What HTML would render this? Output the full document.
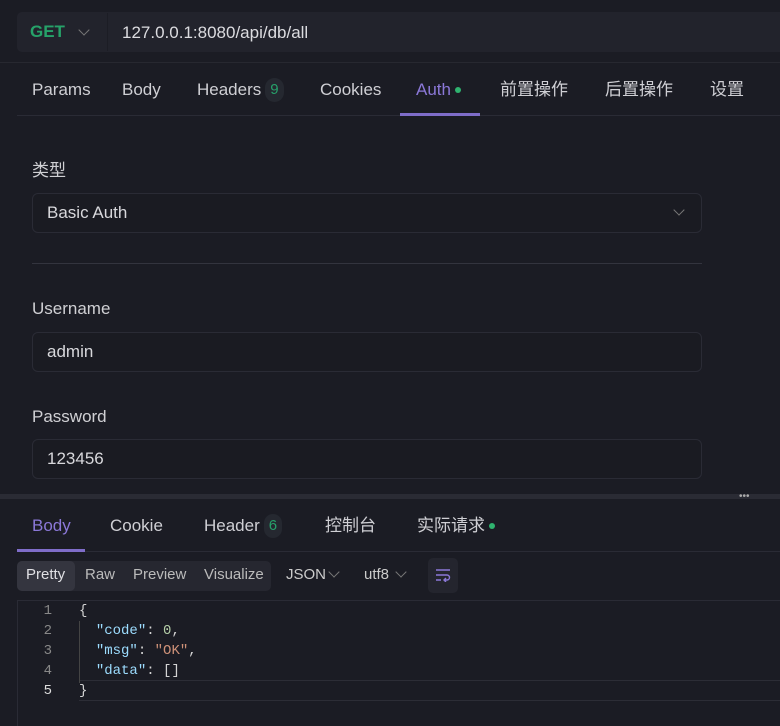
<!DOCTYPE html>
<html><head><meta charset="utf-8"><style>
*{box-sizing:border-box;margin:0;padding:0}
body{width:780px;height:726px;background:#1b1c24;color:#d4d4d8;font-family:"Liberation Sans","Noto Sans CJK SC",sans-serif;font-size:17px;position:relative;overflow:hidden}
.abs{position:absolute}
.url{left:17px;top:12px;width:770px;height:40px;background:#22232c;border-radius:5px}
.get{left:30px;top:22px;color:#26a269;font-weight:bold;font-size:17px;line-height:20px}
.chev{display:inline-block;width:8px;height:8px;border-right:1px solid #777;border-bottom:1px solid #777;transform:rotate(45deg)}
.tab{top:78px;height:24px;line-height:24px;font-size:17px;color:#cfcfd4;display:flex;align-items:center;white-space:nowrap}
.badge{display:inline-block;background:#252830;color:#27a06a;border-radius:10px;padding:0 5px;height:24px;line-height:24px;font-size:15px;margin-left:4px}
.dot{display:inline-block;width:6px;height:6px;border-radius:50%;background:#2fb36f;margin-left:4px}
.inp{left:32px;width:670px;height:40px;border:1px solid #2a2b35;border-radius:6px;background:#1a1b22;padding:0 14px;line-height:38px;color:#d8d8dc}
.lab{left:32px;color:#d0d0d4;line-height:22px}
.code{font-family:"Liberation Mono",monospace;font-size:14px;line-height:20px}
.sm{font-size:15px;line-height:20px;top:565px}
</style></head><body>
<div class="abs url"></div>
<div class="abs" style="left:107px;top:13px;width:1px;height:38px;background:#1c1d25"></div>
<div class="abs get">GET</div>
<div class="abs chev" style="left:80px;top:26px"></div>
<div class="abs" style="left:122px;top:22px;line-height:22px;color:#dcdce0">127.0.0.1:8080/api/db/all</div>
<div class="abs" style="left:0;top:62px;width:780px;height:1px;background:#272830"></div>

<div class="abs tab" style="left:32px">Params</div>
<div class="abs tab" style="left:122px">Body</div>
<div class="abs tab" style="left:197px">Headers<span class="badge">9</span></div>
<div class="abs tab" style="left:320px">Cookies</div>
<div class="abs tab" style="left:416px;color:#8b78d8">Auth<span class="dot"></span></div>
<div class="abs tab" style="left:500px">前置操作</div>
<div class="abs tab" style="left:605px">后置操作</div>
<div class="abs tab" style="left:710px">设置</div>
<div class="abs" style="left:17px;top:115px;width:763px;height:1px;background:#2a2b35"></div>
<div class="abs" style="left:400px;top:113px;width:80px;height:3px;background:#7f6dc9"></div>

<div class="abs lab" style="top:160px">类型</div>
<div class="abs inp" style="top:193px">Basic Auth</div>
<div class="abs chev" style="left:675px;top:206px"></div>
<div class="abs" style="left:32px;top:263px;width:670px;height:1px;background:#33343e"></div>
<div class="abs lab" style="top:298px">Username</div>
<div class="abs inp" style="top:332px">admin</div>
<div class="abs lab" style="top:406px">Password</div>
<div class="abs inp" style="top:439px">123456</div>

<div class="abs" style="left:0;top:494px;width:780px;height:5px;background:#2a2b34"></div>
<div class="abs" style="left:739px;top:494px;color:#aaa;font-size:10px;line-height:6px">•••</div>

<div class="abs tab" style="left:32px;top:514px;color:#8b78d8">Body</div>
<div class="abs tab" style="left:110px;top:514px">Cookie</div>
<div class="abs tab" style="left:204px;top:514px">Header<span class="badge">6</span></div>
<div class="abs tab" style="left:325px;top:514px">控制台</div>
<div class="abs tab" style="left:417px;top:514px">实际请求<span class="dot"></span></div>
<div class="abs" style="left:17px;top:551px;width:763px;height:1px;background:#2a2b35"></div>
<div class="abs" style="left:17px;top:549px;width:68px;height:3px;background:#7f6dc9"></div>

<div class="abs" style="left:17px;top:561px;width:254px;height:30px;background:#262730;border-radius:5px"></div>
<div class="abs" style="left:17px;top:561px;width:58px;height:30px;background:#34353f;border-radius:5px"></div>
<div class="abs sm" style="left:26px;color:#e0e0e4">Pretty</div>
<div class="abs sm" style="left:85px;color:#bbb">Raw</div>
<div class="abs sm" style="left:133px;color:#bbb">Preview</div>
<div class="abs sm" style="left:204px;color:#bbb">Visualize</div>
<div class="abs sm" style="left:286px;color:#ccc">JSON</div>
<div class="abs chev" style="left:330px;top:568px"></div>
<div class="abs sm" style="left:364px;color:#ccc">utf8</div>
<div class="abs chev" style="left:397px;top:568px"></div>
<div class="abs" style="left:428px;top:558px;width:30px;height:35px;background:#24252e;border-radius:5px"></div>
<svg class="abs" style="left:435px;top:568px" width="16" height="14" viewBox="0 0 16 14" fill="none" stroke="#8b78d8" stroke-width="1.4"><path d="M1 2h14M1 7h11a2.5 2.5 0 0 1 0 5H9M11 10l-2 2 2 2M1 12h5"/></svg>

<div class="abs" style="left:17px;top:600px;width:763px;height:126px;border-top:1px solid #2a2b35;border-left:1px solid #2a2b35"></div>
<div class="abs" style="left:79px;top:680px;width:701px;height:21px;border-top:1px solid #2c2d36;border-bottom:1px solid #2c2d36"></div>
<div class="abs" style="left:79px;top:621px;width:1px;height:62px;background:#444"></div>
<div class="abs code" style="left:40px;top:601px;color:#888;text-align:right;width:12px">1<br>2<br>3<br>4<br><span style="color:#ddd">5</span></div>
<div class="abs code" style="left:79px;top:601px;color:#d4d4d4;white-space:pre">{
  <span style="color:#9cdcfe">"code"</span>: <span style="color:#b5cea8">0</span>,
  <span style="color:#9cdcfe">"msg"</span>: <span style="color:#ce9178">"OK"</span>,
  <span style="color:#9cdcfe">"data"</span>: []
}</div>
</body></html>
